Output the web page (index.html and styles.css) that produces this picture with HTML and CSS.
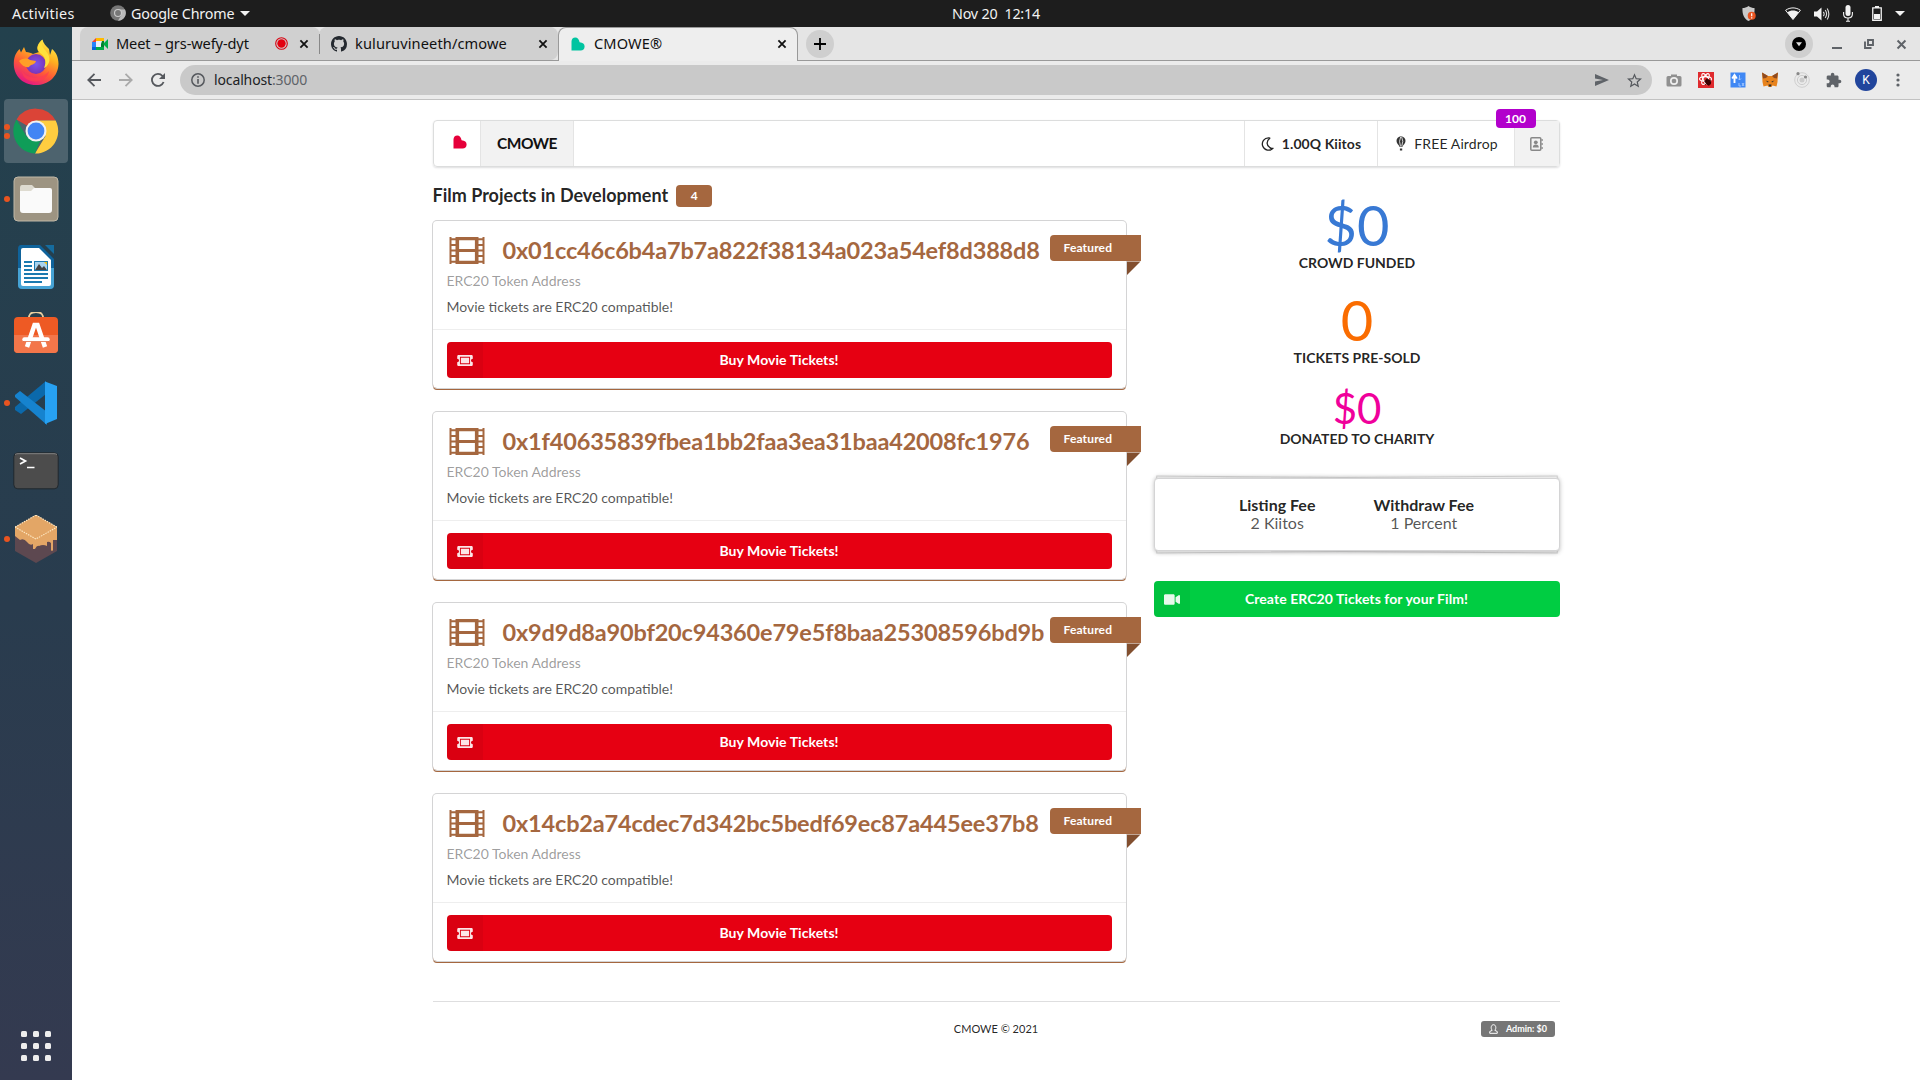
FILE: index.html
```html
<!DOCTYPE html>
<html lang="en">
<head>
<meta charset="utf-8">
<title>CMOWE®</title>
<link rel="stylesheet" href="styles.css">
</head>
<body>
<svg class="defs" width="0" height="0" aria-hidden="true">
  <symbol id="close" viewBox="0 0 10 10"><path d="M1.4 1.4 8.6 8.6M8.6 1.4 1.4 8.6" fill="none" stroke="currentColor" stroke-width="1.8"/></symbol>
  <symbol id="heart" viewBox="0 0 14 14"><path d="M.5 13.600V4.500C.5 2 2 .4 4.300.4 6.500.4 8 2 8.600 5.200 11.800 5.400 13.600 7 13.600 9.500S12 13.600 9.600 13.600Z" fill="currentColor"/></symbol>
  <symbol id="film" viewBox="0 0 36 27">
    <path d="M1.500 0V27M34.500 0V27" stroke="currentColor" stroke-width="2"/>
    <path d="M8.300 0V27M27.700 0V27" stroke="currentColor" stroke-width="3.600"/>
    <path d="M8 1.600H28M8 25.400H28" stroke="currentColor" stroke-width="3.200"/>
    <path d="M8 13.500H28" stroke="currentColor" stroke-width="3"/>
    <path d="M1 2.300H8M1 8H8M1 13.500H8M1 19H8M1 24.700H8M28 2.300H35M28 8H35M28 13.500H35M28 19H35M28 24.700H35" stroke="currentColor" stroke-width="2"/>
  </symbol>
  <symbol id="ticket" viewBox="0 0 17 12"><path fill="currentColor" fill-rule="evenodd" d="M1.5 0h14A1.5 1.5 0 0 1 17 1.5V4a2 2 0 0 0 0 4v2.500A1.500 1.500 0 0 1 15.500 12h-14A1.500 1.500 0 0 1 0 10.500V8a2 2 0 0 0 0-4V1.500A1.500 1.500 0 0 1 1.500 0ZM3 2v8h11V2ZM4 3h9v6H4Z"/></symbol>
</svg>

<header class="topbar">
  <span class="activities">Activities</span>
  <svg class="app-icon" viewBox="0 0 16 16"><circle cx="8" cy="8" r="7.8" fill="#777"/><path d="M8 4.500H15A7.800 7.800 0 0 1 8 15.800L11.400 10Z" fill="#bbb"/><circle cx="8" cy="8" r="4" fill="#ccc"/><circle cx="8" cy="8" r="2.900" fill="#777"/></svg>
  <span class="app-name">Google Chrome</span>
  <i class="caret"></i>
  <time class="clock">Nov 20&nbsp; 12:14</time>
  <div class="tray">
    <svg class="shield" viewBox="0 0 14 16"><path d="M6.500 0C8.500 1.500 10.500 2 12.500 2 13 8.500 10.500 13 6.500 15 2.500 13 0 8.500.5 2 2.500 2 4.500 1.500 6.500 0Z" fill="#c9c9c9"/><circle cx="9.700" cy="9.800" r="4" fill="#e95420"/><path d="M9.700 7.300V10.300M9.700 11.200V12.400" stroke="#fff" stroke-width="1.200"/></svg>
    <svg class="wifi" viewBox="0 0 16 13"><path d="M8 12.500.6 3.300C5 .1 11 .1 15.400 3.300Z" fill="none" stroke="#f2f2f2"/><path d="M8 12.500 2.400 5.400C5.500 3 10.500 3 13.600 5.400Z" fill="#f2f2f2"/></svg>
    <svg class="volume" viewBox="0 0 16 14"><path d="M0 4.500H3L7.500.5V13.500L3 9.500H0Z" fill="#f2f2f2"/><path d="M9.300 4.800Q11 7 9.300 9.200M11.200 3Q14 7 11.200 11M13.200 1.500Q16.500 7 13.200 12.500" fill="none" stroke="#ddd" stroke-width="1.100"/></svg>
    <svg class="mic" viewBox="0 0 10 17"><rect x="2.500" width="5" height="11" rx="2.500" fill="#f2f2f2"/><path d="M.6 7V9Q.6 13 5 13T9.400 9V7M5 13V16M3 16.200H7" fill="none" stroke="#f2f2f2" stroke-width="1.100"/></svg>
    <svg class="battery" viewBox="0 0 10 15"><path d="M.75 1.800H9.250V14.250H.75ZM3 .7H7" fill="none" stroke="#f2f2f2" stroke-width="1.300"/><path d="M2 8H8V13H2Z" fill="#f2f2f2"/></svg>
    <i class="caret"></i>
  </div>
</header>

<div class="desktop">
  <nav class="dock">
    <div class="app"><svg viewBox="0 0 46 46">
      <defs><linearGradient id="ff" x1=".8" y1="0" x2=".3" y2="1"><stop offset="0" stop-color="#fff44f"/><stop offset=".35" stop-color="#ffb020"/><stop offset=".65" stop-color="#ff5a36"/><stop offset="1" stop-color="#e31587"/></linearGradient><radialGradient id="fp"><stop offset="0" stop-color="#7a55ef"/><stop offset="1" stop-color="#7a35b8"/></radialGradient></defs>
      <path d="M23 46C9 46 .5 36 .8 24 1 17 3.500 13 6.500 10L8 13.500 11 8 13 13C16 13 18 14 20 15L26 13C22 9 26 3 29.500.5 30 4 33 7 36 10L37 16 39 10C43 13 45.500 18 45.500 25 45 38 35 46 23 46Z" fill="url(#ff)"/>
      <circle cx="23" cy="25" r="10" fill="url(#fp)"/>
      <path d="M6 22C10 19 14 19 17 21L23 22C22 26 18 25 16 28 13 29 9 27 6 22Z" fill="#ff9f27"/><path d="M29.500 1C27 7 32 10 35 15 39 22 34 28 31 29 34 22 32 17 27 14 22 9 26 4 29.500 1Z" fill="#ffe03c"/>
      <path d="M8 31C13 40 28 42 36 32 34 43 19 46 11 38Z" fill="#ff3f51" opacity=".7"/></svg></div>
    <div class="app active"><b class="dot two"></b><svg viewBox="0 0 46 46">
      <path d="M23 23 3.500 11.500A22.500 22.500 0 0 1 42.600 12.500H23Z" fill="#db4437"/><path d="M23 12.500H42.600A22.500 22.500 0 0 1 22 45.500L32.500 28Z" fill="#ffcd40"/><path d="M3.500 11.500 13.500 28.500 27.500 32 22 45.500A22.500 22.500 0 0 1 3.500 11.500Z" fill="#0f9d58"/>
      <circle cx="23" cy="23" r="10.500" fill="#f1f1f1"/><circle cx="23" cy="23" r="8.400" fill="#4285f4"/></svg></div>
    <div class="app"><b class="dot"></b><svg viewBox="0 0 46 46"><rect x="1" y="1" width="44" height="44" rx="4" fill="#9d9482" stroke="#c0b8a7"/><path d="M7 12Q7 9 9 9H19L22 12H36V20H7Z" fill="#dedbd0"/><path d="M7 15H18L21 12H37Q39 12 39 14V34Q39 37 36 37H10Q7 37 7 34Z" fill="#fafafa"/></svg></div>
    <div class="app"><svg viewBox="0 0 46 46"><path d="M8 1H27L41 15V41Q41 45 37 45H9Q5 45 5 41V5Q5 1 8 1Z" fill="#0f639b"/><path d="M5 24H41V41Q41 45 37 45H9Q5 45 5 41Z" fill="#46a3d5"/><path d="M10 4H26L38 16V40Q38 42 36 42H10Q8 42 8 40V6Q8 4 10 4Z" fill="#fff"/><path d="M32 1H41V10Z" fill="#156c9f"/><path d="M11 18H19M11 22H19M11 26H19M11 30H35M11 34H35M11 38H29" stroke="#1b7ab0" stroke-width="2"/><rect x="21" y="17" width="14" height="10" fill="#1b7ab0"/><path d="M22 18H34V26H22Z" fill="#a9d3ee"/><path d="M22 26 26 20 29 24 31 22 34 26Z" fill="#444"/><path d="M31 18H34V21Z" fill="#f5c211"/></svg></div>
    <div class="app"><svg viewBox="0 2 46 46"><path d="M16 10Q15 2 23 2T30 10" fill="none" stroke="#e8cfa0" stroke-width="1.800"/><rect x="1" y="7" width="44" height="36" rx="4" fill="#ee5a24"/><path d="M1 25H45V39Q45 43 41 43H5Q1 43 1 39Z" fill="#f3764a"/><path d="M14 37 21.500 15H24.500L32 37" fill="none" stroke="#fff" stroke-width="4.500"/><path d="M11.500 29.500H34.500" stroke="#fff" stroke-width="4.500" stroke-linecap="round"/><path d="M10 31.500H36" stroke="#dc5628" stroke-width=".7"/></svg></div>
    <div class="app"><b class="dot"></b><svg viewBox="0 0 46 46"><path d="M33 1V14L8 34 2 30V27Z" fill="#0b69ab"/><path d="M2 15 7 11 34 32V45L2 17Z" fill="#1683cf"/><path d="M32 1.500 44 6V39L32 44Z" fill="#27a1f2"/></svg></div>
    <div class="app"><svg viewBox="0 0 46 46"><rect x=".8" y="4.800" width="44.400" height="36" rx="4" fill="#4c4c4c" stroke="#20282e"/><path d="M2 6.500Q3 5.700 5 5.700H41Q43 5.700 44 6.500" stroke="#828282" fill="none"/><path d="M7 10 12.500 13 7 16M14 19.500H21.500" fill="none" stroke="#fff" stroke-width="1.700"/></svg></div>
    <div class="app"><b class="dot"></b><svg class="cube" viewBox="0 0 42 48"><path d="M21 0 42 12V36L21 48 0 36V12Z" fill="#5d4850"/><path d="M21 0 42 12V25H38V35Q37 37 36 35V28Q34 26 32 27V31Q28 29 24 31 22 30 20 34H18V29Q15 31 12 27 9 23 5 25L0 21V12Z" fill="#e3a666"/><path d="M0 12 21 24 42 12M21 0 0 12M21 0 42 12" fill="none" stroke="#ffeac5" stroke-width="1.100" stroke-dasharray="1.500 1"/></svg></div>
    <div class="apps"><i></i><i></i><i></i><i></i><i></i><i></i><i></i><i></i><i></i></div>
  </nav>

  <div class="browser">
    <div class="tabs">
      <div class="tab">
        <svg class="fav" viewBox="0 0 16 14"><path d="M4 1H12V4H4Z" fill="#ffba00"/><path d="M0 5 4 1V5Z" fill="#ea4335"/><path d="M0 5H4V10H0Z" fill="#2684fc"/><path d="M0 10H4V13H0Z" fill="#0066da"/><path d="M4 10H12V13H4Z" fill="#00ac47"/><path d="M4 4H10V10H4Z" fill="#e8eef8"/><path d="M10 4H12V10H9V7Z" fill="#00832d"/><path d="M11 7 16 2V12Z" fill="#00ac47"/></svg>
        <span class="tab-title t-meet">Meet – grs-wefy-dyt</span>
        <svg class="rec" viewBox="0 0 13 13"><circle cx="6.500" cy="6.500" r="5.800" fill="none" stroke="#d8000f" stroke-width="1.100"/><circle cx="6.500" cy="6.500" r="4.200" fill="#e3000f"/></svg>
        <svg class="x"><use href="#close"/></svg>
      </div>
      <div class="tab second">
        <svg class="fav" viewBox="0 0 16 16"><path fill="#24292f" d="M8 0C3.580 0 0 3.580 0 8c0 3.540 2.290 6.530 5.470 7.590.4.070.55-.17.55-.38 0-.19-.01-.82-.01-1.490-2.010.37-2.530-.49-2.690-.94-.09-.23-.48-.94-.82-1.130-.28-.15-.68-.52-.01-.53.63-.01 1.080.58 1.230.82.72 1.210 1.870.87 2.330.66.07-.52.28-.87.51-1.070-1.780-.2-3.640-.89-3.640-3.950 0-.87.31-1.590.82-2.150-.08-.2-.36-1.020.08-2.120 0 0 .67-.21 2.200.82.64-.18 1.320-.27 2-.27s1.360.09 2 .27c1.530-1.040 2.200-.82 2.200-.82.44 1.100.16 1.920.08 2.120.51.56.82 1.270.82 2.150 0 3.070-1.870 3.750-3.650 3.950.29.25.54.73.54 1.480 0 1.070-.01 1.930-.01 2.200 0 .21.15.46.55.38A8.010 8.010 0 0 0 16 8c0-4.420-3.580-8-8-8z"/></svg>
        <span class="tab-title t-git">kuluruvineeth/cmowe</span>
        <svg class="x"><use href="#close"/></svg>
      </div>
      <div class="tab current">
        <svg class="fav teal"><use href="#heart"/></svg>
        <span class="tab-title t-cm">CMOWE®</span>
        <svg class="x"><use href="#close"/></svg>
      </div>
      <div class="round new-tab"><svg viewBox="0 0 12 12"><path d="M6 0V12M0 6H12" stroke="#000" stroke-width="1.800"/></svg></div>
      <div class="window-controls">
        <div class="round"><svg class="search-tabs" viewBox="0 0 14 14"><circle cx="7" cy="7" r="7"/><path d="M4 5.200H10L7 9.300Z" fill="#ddd"/></svg></div>
        <svg class="min" viewBox="0 0 10 10"><path d="M0 9H10" stroke="#5f6368" stroke-width="2"/></svg>
        <svg class="restore" viewBox="0 0 10 10"><path d="M4 1H9V6H4ZM1 2.500V9H7.500" fill="none" stroke="#5f6368" stroke-width="1.900"/></svg>
        <svg class="shut"><use href="#close"/></svg>
      </div>
    </div>

    <div class="toolbar">
      <svg class="back" viewBox="0 0 14 14"><path d="M14 7H1.500M7.500.8 1.300 7 7.500 13.200" fill="none" stroke="#55585d" stroke-width="1.800"/></svg>
      <svg class="forward" viewBox="0 0 14 14"><path d="M0 7H12.500M6.500.8 12.700 7 6.500 13.200" fill="none" stroke="#aaa" stroke-width="1.800"/></svg>
      <svg class="reload" viewBox="0 0 14 14"><path d="M12.600 9A6 6 0 1 1 11.500 3L12.500 4.200" fill="none" stroke="#55585d" stroke-width="1.800"/><path d="M14 0V6H8Z" fill="#55585d"/></svg>
      <div class="omnibox">
        <svg class="info" viewBox="0 0 14 14"><circle cx="7" cy="7" r="6.200" fill="none" stroke="#55585d" stroke-width="1.500"/><path d="M7 6V10.700M7 3.300V4.800" stroke="#55585d" stroke-width="1.600"/></svg>
        <span class="url">localhost<em>:3000</em></span>
        <svg class="send" viewBox="0 0 14 12"><path d="M0 0 14 6 0 12V7.500L8 6 0 4.500Z" fill="#5f6368"/></svg>
        <svg class="star" viewBox="2 2 20 19.500"><path fill="#55585d" d="m22 9.240-7.190-.62L12 2 9.190 8.630 2 9.240l5.460 4.730L5.820 21 12 17.270 18.180 21l-1.630-7.030L22 9.240zM12 15.400l-3.760 2.270 1-4.280-3.320-2.880 4.380-.38L12 6.100l1.710 4.040 4.380.38-3.320 2.880 1 4.280L12 15.400z"/></svg>
      </div>
      <div class="extensions">
        <svg viewBox="0 0 16 16"><path d="M2 4H5V2.500H11V4H14Q15.500 4 15.500 5.500V13Q15.500 14.500 14 14.500H2Q.5 14.500.5 13V5.500Q.5 4 2 4Z" fill="#909090"/><circle cx="8" cy="9" r="3.200" fill="none" stroke="#eee" stroke-width="1.700"/></svg>
        <svg viewBox="0 0 16 16"><path d="M0 0H16V16H0Z" fill="#df2a2e"/><g fill="none" stroke="#fff" stroke-width="1.100"><ellipse cx="7.500" cy="7" rx="6" ry="2.400"/><ellipse cx="7.500" cy="7" rx="6" ry="2.400" transform="rotate(60 7.500 7)"/><ellipse cx="7.500" cy="7" rx="6" ry="2.400" transform="rotate(120 7.500 7)"/></g><ellipse cx="10" cy="10" rx="2.600" ry="3.400" fill="#300" transform="rotate(-40 10 10)"/><path d="M6 9 13 12M9 6 11 14M7 13 13 8" fill="none" stroke="#400" stroke-width=".8"/></svg>
        <svg viewBox="0 0 16 16"><path d="M.5.5H15.500V15.500H.5Z" fill="#4088f4"/><path d="M4.500 11V4M2.200 6.500 4.500 3 6.800 6.500" fill="none" stroke="#fff" stroke-width="1.900"/><path d="M9.500 3V8M8 6.500 9.500 8 11 6.500M9 11V14H11M12 11 14 14M14 11 12 14" fill="none" stroke="#a9cbff" stroke-width=".9"/></svg>
        <svg viewBox="0 0 16 16"><path d="M0 .5 6 4H10L16 .5 15.500 10 14.500 14.500 10.500 13.500 9.500 15H6.500L5.500 13.500 1.500 14.500.5 10Z" fill="#e8831d"/><path d="M0 .5 6 4 4 6 1 6.500ZM16 .5 10 4 12 6 15 6.500Z" fill="#8f4a20"/><path d="M3.500 8.500 6.500 9.500 6 10.500ZM12.500 8.500 9.500 9.500 10 10.500ZM6.500 12.500H9.500L9 14.500H7Z" fill="#2b2b2b"/></svg>
        <svg viewBox="0 0 16 16"><circle cx="8" cy="8" r="7.300" fill="none" stroke="#cfcfcf"/><circle cx="8" cy="8" r="4.600" fill="none" stroke="#ccc"/><circle cx="8" cy="8" r="2.500" fill="#ccc"/><circle cx="4" cy="1.700" r="1.600" fill="#888"/><circle cx="11.500" cy="5" r="1.600" fill="#888"/></svg>
        <svg viewBox="1 0 23 23"><path fill="#5f6368" d="M20.500 11H19V7c0-1.100-.9-2-2-2h-4V3.500C13 2.120 11.880 1 10.500 1S8 2.120 8 3.500V5H4c-1.100 0-1.990.9-1.990 2v3.800H3.500c1.490 0 2.700 1.210 2.700 2.700s-1.210 2.700-2.700 2.700H2V20c0 1.100.9 2 2 2h3.800v-1.500c0-1.490 1.210-2.700 2.700-2.700 1.490 0 2.700 1.210 2.700 2.700V22H17c1.100 0 2-.9 2-2v-4h1.500c1.380 0 2.500-1.120 2.500-2.500S21.880 11 20.500 11z"/></svg>
      </div>
      <span class="avatar">K</span>
      <svg class="kebab" viewBox="0 0 4 14"><circle cx="2" cy="2" r="1.600"/><circle cx="2" cy="7" r="1.600"/><circle cx="2" cy="12" r="1.600"/></svg>
    </div>

    <main class="page">
      <div class="container">
        <nav class="menu">
          <a class="item logo"><svg><use href="#heart"/></svg></a>
          <a class="item brand">CMOWE</a>
          <a class="item balance"><svg viewBox="0 0 14 14"><path d="M8.800.8A6.200 6.200 0 1 0 13 11.300 3 3 0 0 1 9.800 10.500C6.500 8.500 6 4 9.800 1.200Z" fill="none" stroke="#222" stroke-width="1.300" stroke-linejoin="round"/></svg><b>1.00Q Kiitos</b></a>
          <a class="item airdrop"><svg viewBox="0 0 10 15"><path d="M5 .2A4.600 4.600 0 0 1 9.500 5C9.500 7.500 7 9 6.300 11H3.700C3 9 .5 7.500.5 5A4.600 4.600 0 0 1 5 .2Z" fill="#333"/><path d="M4.700.8Q2.500 5 4.500 10.500M5.600.8Q8 5 5.700 10.500" fill="none" stroke="#fff" stroke-width=".8"/><path d="M3.900 12.500H6.200V14.500H3.900Z" fill="#333"/></svg><span>FREE Airdrop</span></a>
          <a class="item contact"><svg viewBox="0 0 13 14"><rect x=".8" y=".8" width="10" height="12.400" rx="1" fill="none" stroke="#888" stroke-width="1.500"/><circle cx="5.800" cy="5.300" r="1.900" fill="#888"/><path d="M2.800 10.500Q2.800 7.500 5.800 7.500T8.800 10.500ZM11.500 2H12.700V4H11.500ZM11.500 6H12.700V8H11.500ZM11.500 10H12.700V12H11.500Z" fill="#888"/></svg><span class="count">100</span></a>
        </nav>

        <div class="grid">
          <section class="projects">
            <h3>Film Projects in Development <span class="total">4</span></h3>
            <article class="card">
              <span class="ribbon">Featured</span>
              <div class="content"><h2><svg><use href="#film"/></svg>0x01cc46c6b4a7b7a822f38134a023a54ef8d388d8</h2><p class="meta">ERC20 Token Address</p><p class="desc">Movie tickets are ERC20 compatible!</p></div>
              <div class="extra"><button class="btn red"><span class="cell"><svg><use href="#ticket"/></svg></span>Buy Movie Tickets!</button></div>
            </article>
            <article class="card">
              <span class="ribbon">Featured</span>
              <div class="content"><h2><svg><use href="#film"/></svg>0x1f40635839fbea1bb2faa3ea31baa42008fc1976</h2><p class="meta">ERC20 Token Address</p><p class="desc">Movie tickets are ERC20 compatible!</p></div>
              <div class="extra"><button class="btn red"><span class="cell"><svg><use href="#ticket"/></svg></span>Buy Movie Tickets!</button></div>
            </article>
            <article class="card">
              <span class="ribbon">Featured</span>
              <div class="content"><h2><svg><use href="#film"/></svg>0x9d9d8a90bf20c94360e79e5f8baa25308596bd9b</h2><p class="meta">ERC20 Token Address</p><p class="desc">Movie tickets are ERC20 compatible!</p></div>
              <div class="extra"><button class="btn red"><span class="cell"><svg><use href="#ticket"/></svg></span>Buy Movie Tickets!</button></div>
            </article>
            <article class="card">
              <span class="ribbon">Featured</span>
              <div class="content"><h2><svg><use href="#film"/></svg>0x14cb2a74cdec7d342bc5bedf69ec87a445ee37b8</h2><p class="meta">ERC20 Token Address</p><p class="desc">Movie tickets are ERC20 compatible!</p></div>
              <div class="extra"><button class="btn red"><span class="cell"><svg><use href="#ticket"/></svg></span>Buy Movie Tickets!</button></div>
            </article>
          </section>

          <aside class="side">
            <div class="stat blue"><div class="value">$0</div><div class="label">CROWD FUNDED</div></div>
            <div class="stat orange"><div class="value">0</div><div class="label">TICKETS PRE-SOLD</div></div>
            <div class="stat pink"><div class="value">$0</div><div class="label">DONATED TO CHARITY</div></div>
            <div class="piled"><div class="fees">
              <div><b>Listing Fee</b><span>2 Kiitos</span></div>
              <div><b>Withdraw Fee</b><span>1 Percent</span></div>
            </div></div>
            <button class="btn green"><span class="cell"><svg viewBox="0 64 576 384"><path fill="currentColor" d="M336.200 64H47.800C21.400 64 0 85.400 0 111.800v288.400C0 426.600 21.400 448 47.800 448h288.400c26.400 0 47.800-21.400 47.800-47.800V111.800c0-26.400-21.400-47.800-47.800-47.800zm189.400 37.700L416 177.300v157.400l109.600 75.500c21.200 14.600 50.400-.3 50.400-25.700V127.400c0-25.400-29.100-40.400-50.400-25.700z"/></svg></span>Create ERC20 Tickets for your Film!</button>
          </aside>
        </div>

        <footer class="footer">
          <span class="copy">CMOWE © 2021</span>
          <span class="admin"><svg viewBox="0 0 10 11"><path d="M3.500 7C1.500 4.500 2.500.7 5 .7S8.500 4.500 6.500 7M3.500 7 .8 8.300V10.300H9.200V8.300L6.500 7" fill="none" stroke="#fff" stroke-width="1.100"/></svg>Admin: $0</span>
        </footer>
      </div>
    </main>
  </div>
</div>
</body>
</html>
```
FILE: styles.css
```css
* { box-sizing: border-box; }
body {
  margin: 0;
  width: 1920px;
  height: 1080px;
  overflow: hidden;
  display: flex;
  flex-direction: column;
  background: #fff;
  font-family: "Noto Sans", "Open Sans", sans-serif;
}
.defs { position: absolute; }
svg { display: block; flex: none; }
h2, h3, p { margin: 0; }

/* GNOME top bar */
.topbar {
  height: 27px;
  flex: none;
  display: grid;
  grid-template-columns: 110px 21px 109px 12px 1fr auto;
  align-items: center;
  background: #1d1d1d;
  color: #f2f2f2;
  font-size: 14.3px;
}
.topbar > *, .tray > * { white-space: nowrap; }
.activities { padding-left: 12px; letter-spacing: .3px; }
.app-icon { width: 16px; height: 16px; margin-top: -1px; }
.app-name { letter-spacing: -.17px; }
.caret {
  width: 10px;
  height: 5px;
  background: #f2f2f2;
  clip-path: polygon(0 0, 100% 0, 50% 100%);
}
.clock { padding-left: 700px; margin-top: -1px; letter-spacing: -.2px; }
.tray { display: flex; align-items: center; padding-right: 15px; }
.shield { width: 14px; height: 16px; margin-right: 29px; }
.wifi { width: 16px; height: 13px; margin-right: 13px; }
.volume { width: 16px; height: 14px; margin-right: 13px; }
.mic { width: 10px; height: 17px; margin-right: 19px; }
.battery { width: 10px; height: 15px; margin-right: 13px; }

.desktop { flex: 1; display: flex; min-height: 0; }

/* Dock */
.dock {
  width: 72px;
  flex: none;
  display: flex;
  flex-direction: column;
  gap: 4px;
  padding: 4px 4px 19px;
  background: linear-gradient(#23414d, #293c4e 55%, #343a50);
}
.app {
  position: relative;
  height: 64px;
  display: flex;
  align-items: center;
  justify-content: center;
  border-radius: 4px;
}
.app svg { width: 46px; height: 46px; }
.app:first-child svg { margin-top: -3px; }
.app svg.cube { width: 42px; height: 48px; }
.app.active { background: #4d636e; }
.dot {
  position: absolute;
  left: 0;
  top: 29px;
  width: 6px;
  height: 6px;
  border-radius: 50%;
  background: #e95420;
}
.dot.two { top: 25px; box-shadow: 0 9px #e95420; }
.apps {
  margin: auto auto 0;
  display: grid;
  grid-template-columns: repeat(3, 6px);
  gap: 6px;
}
.apps i { height: 6px; border-radius: 1.5px; background: #eee; }

/* Chrome window */
.browser { flex: 1; display: flex; flex-direction: column; min-width: 0; }
.tabs {
  height: 34px;
  flex: none;
  display: flex;
  padding-left: 8px;
  background: linear-gradient(#999, #999) bottom / 100% 1px no-repeat #e5e5e5;
}
.tab {
  width: 240px;
  height: 33px;
  display: flex;
  align-items: center;
  padding: 0 11px 0 12px;
  border-radius: 8px 8px 0 0;
  background: #d0d0d0;
  color: #111;
}
.tab.second { width: 238px; padding-left: 11px; border-radius: 8px 8px 8px 0; box-shadow: -1px 0 #d0d0d0; }
.tab.second::before { content: ""; width: 1px; height: 20px; margin: 0 11px 0 -12px; background: #888; }
.tab.current {
  height: 34px;
  padding: 0 10px 1px 12px;
  border: 1px solid #999;
  border-bottom: 0;
  background: #eee;
}
.fav { width: 16px; height: 16px; margin-right: 8px; }
.fav.teal { width: 14px; height: 14px; color: #00c4a0; margin-right: 9px; }
.tab-title { flex: 1; min-width: 0; margin-top: -2px; font-size: 14.6px; white-space: nowrap; }
.t-meet { letter-spacing: -.12px; }
.t-git { letter-spacing: .1px; }
.t-cm { letter-spacing: .1px; }
.rec { width: 13px; height: 13px; margin-right: 11px; }
.x { width: 10px; height: 10px; color: #111; }
.second .x { margin-right: -1px; }
.round {
  width: 28px;
  height: 28px;
  margin-top: 3px;
  display: flex;
  align-items: center;
  justify-content: center;
  border-radius: 50%;
  background: #cfcfcf;
}
.new-tab { margin-left: 8px; }
.new-tab svg { width: 12px; height: 12px; }
.window-controls { margin-left: auto; display: flex; padding-right: 13px; }
.search-tabs { width: 14px; height: 14px; }
.min, .restore { width: 10px; height: 10px; margin: 12px 0 0 19px; }
.restore { margin-left: 22px; }
.shut { width: 11px; height: 11px; margin: 12px 0 0 22px; color: #5f6368; }

.toolbar {
  height: 39px;
  flex: none;
  display: flex;
  align-items: center;
  padding-left: 15px;
  border-bottom: 1px solid #c2c2c2;
  background: #ebebeb;
}
.back, .forward, .reload { width: 14px; height: 14px; margin-right: 18px; }
.reload { margin-right: 15px; }
.omnibox {
  width: 1472px;
  height: 30px;
  display: flex;
  align-items: center;
  padding: 0 10px 0 11px;
  border-radius: 15px;
  background: #c9c9c9;
}
.info { width: 14px; height: 14px; margin-right: 9px; }
.url { flex: 1; margin-top: -1px; font-size: 14px; letter-spacing: -.13px; color: #202124; }
.url em { font-style: normal; color: #5f6368; }
.send { width: 14px; height: 12px; margin-right: 18px; }
.star { width: 15px; height: 15px; }
.extensions { display: flex; gap: 16px; margin-left: 14px; }
.extensions svg { width: 16px; height: 16px; }
.avatar {
  width: 22px;
  height: 22px;
  margin-left: 13px;
  border-radius: 50%;
  background: #21459c;
  color: #fff;
  font: 12px/22px Roboto, sans-serif;
  text-align: center;
}
.kebab { width: 4px; height: 14px; margin-left: 19px; fill: #5f6368; }

/* Page */
.page {
  flex: 1;
  padding-top: 20px;
  background: #fff;
  color: rgba(0, 0, 0, .87);
  font-family: Lato, sans-serif;
  font-size: 14px;
  line-height: 20px;
}
.container { width: 1127px; margin: 0 auto; }
.menu {
  height: 47px;
  display: flex;
  border: 1px solid #dcdddd;
  border-radius: 4px;
  box-shadow: 0 1px 2px rgba(34, 36, 38, .15);
}
.item { display: flex; align-items: center; justify-content: center; border-right: 1px solid #e4e4e4; }
.logo { width: 47px; }
.logo svg { width: 14px; height: 14px; margin: -3px 0 0 6px; color: #e6003a; }
.brand { width: 93px; padding: 0 0 1px 1px; background: #f2f2f2; font-size: 15.5px; font-weight: 700; letter-spacing: -.45px; color: #111; }
.balance { width: 134px; margin-left: auto; border-left: 1px solid #e4e4e4; }
.balance svg { width: 14px; height: 14px; margin-right: 8px; }
.balance b { letter-spacing: .08px; }
.airdrop { width: 137px; padding-left: 3px; }
.airdrop svg { width: 10px; height: 15px; margin-right: 8px; }
.airdrop span { letter-spacing: .12px; }
.contact { position: relative; width: 44px; border: 0; background: #f2f2f2; }
.contact svg { width: 13px; height: 14px; }
.count {
  position: absolute;
  top: -12px;
  right: 23px;
  width: 40px;
  height: 19px;
  border-radius: 4px;
  background: #b200cc;
  color: #fff;
  font-size: 12px;
  font-weight: 700;
  line-height: 19px;
  text-align: center;
}

.grid { display: grid; grid-template-columns: 693px 406px; gap: 28px; }
.projects h3 {
  height: 22px;
  margin: 18px 0 14.400px;
  display: flex;
  align-items: flex-start;
  gap: 8px;
  font-size: 18px;
  line-height: 20px;
  white-space: nowrap;
}
.total {
  width: 36px;
  height: 22px;
  border-radius: 4px;
  background: #a5673f;
  color: #fff;
  font-size: 12px;
  line-height: 22px;
  text-align: center;
}
.card {
  position: relative;
  height: 167px;
  margin-bottom: 24px;
  border-radius: 4px;
  box-shadow: 0 0 0 1px #d4d4d5, 0 2px 0 0 #a5673f;
}
.content { height: 108px; padding: 14px; }
.card h2 {
  display: flex;
  align-items: center;
  height: 30px;
  font-size: 23.5px;
  letter-spacing: -.17px;
  line-height: 30px;
  color: #a5673f;
  white-space: nowrap;
}
.card h2 svg { width: 36px; height: 27px; margin: 0 18px 0 2px; }
.meta { margin-top: 6px; color: rgba(0, 0, 0, .4); }
.desc { margin-top: 6px; color: rgba(0, 0, 0, .68); }
.extra { padding: 12px 14px 0; border-top: 1px solid #eee; }
.ribbon {
  position: absolute;
  top: 14px;
  right: -15px;
  width: 91px;
  height: 26px;
  padding-left: 14px;
  border-radius: 4px 0 0 4px;
  background: #a5673f;
  color: #fff;
  font-size: 12px;
  font-weight: 700;
  letter-spacing: .15px;
  line-height: 26px;
}
.ribbon::after {
  content: "";
  position: absolute;
  top: 100%;
  right: 0;
  width: 14px;
  height: 14px;
  background: #824f2f;
  clip-path: polygon(0 0, 100% 0, 0 100%);
}
.btn {
  width: 100%;
  height: 36px;
  padding: 0 36px 0 0;
  display: flex;
  align-items: center;
  border: 0;
  border-radius: 4px;
  overflow: hidden;
  color: #fff;
  font: 700 14px/36px Lato, sans-serif;
  justify-content: center;
}
.cell {
  width: 36px;
  height: 36px;
  margin-right: auto;
  display: flex;
  align-items: center;
  justify-content: center;
  background: rgba(0, 0, 0, .05);
  color: rgba(255, 255, 255, .9);
}
.btn::after { content: ""; margin-left: auto; }
.cell svg { width: 16px; height: 11px; }
.red { background: #e60012; letter-spacing: .06px; }
.green { background: #00cd42; letter-spacing: .06px; }

.side { padding-top: 30px; text-align: center; }
.stat { margin-bottom: 19px; padding-left: 1px; }
.stat .value { font-size: 56px; line-height: 56px; }
.stat .label { font-weight: 700; }
.blue .value { color: #3879d4; }
.orange .value { color: #fa6c00; }
.pink .value { color: #f0009b; font-size: 42px; line-height: 42px; }
.piled { position: relative; z-index: 0; margin: 29px 0 30px; height: 73px; }
.piled::before, .piled::after {
  content: "";
  position: absolute;
  z-index: -1;
  inset: -1px 2px;
  border: 1px solid #d0d0d0;
  background: #f7f7f7;
  box-shadow: 0 0 4px rgba(0, 0, 0, .1);
}
.piled::before { transform: rotate(.4deg); }
.piled::after { transform: rotate(-.4deg); }
.fees {
  height: 73px;
  display: flex;
  justify-content: center;
  gap: 58px;
  padding: 17px 0 0;
  border: 1px solid #d4d4d5;
  border-radius: 4px;
  background: #fff;
  box-shadow: 0 1px 5px rgba(0, 0, 0, .2);
  font-size: 16px;
  line-height: 18px;
}
.fees b, .fees span { display: block; }
.fees span { color: rgba(0, 0, 0, .68); }

.footer {
  height: 54px;
  margin-top: 16px;
  border-top: 1px solid #dededf;
  display: grid;
  grid-template-columns: 1fr auto 1fr;
  align-items: center;
  font-size: 11px;
}
.copy { grid-column: 2; }
.admin {
  justify-self: end;
  width: 74px;
  height: 16px;
  margin-right: 5px;
  padding-left: 1px;
  display: flex;
  align-items: center;
  justify-content: center;
  gap: 8px;
  border-radius: 3px;
  background: #767676;
  color: #fff;
  font-size: 9px;
  font-weight: 700;
}
.admin svg { width: 9px; height: 10px; }
```
